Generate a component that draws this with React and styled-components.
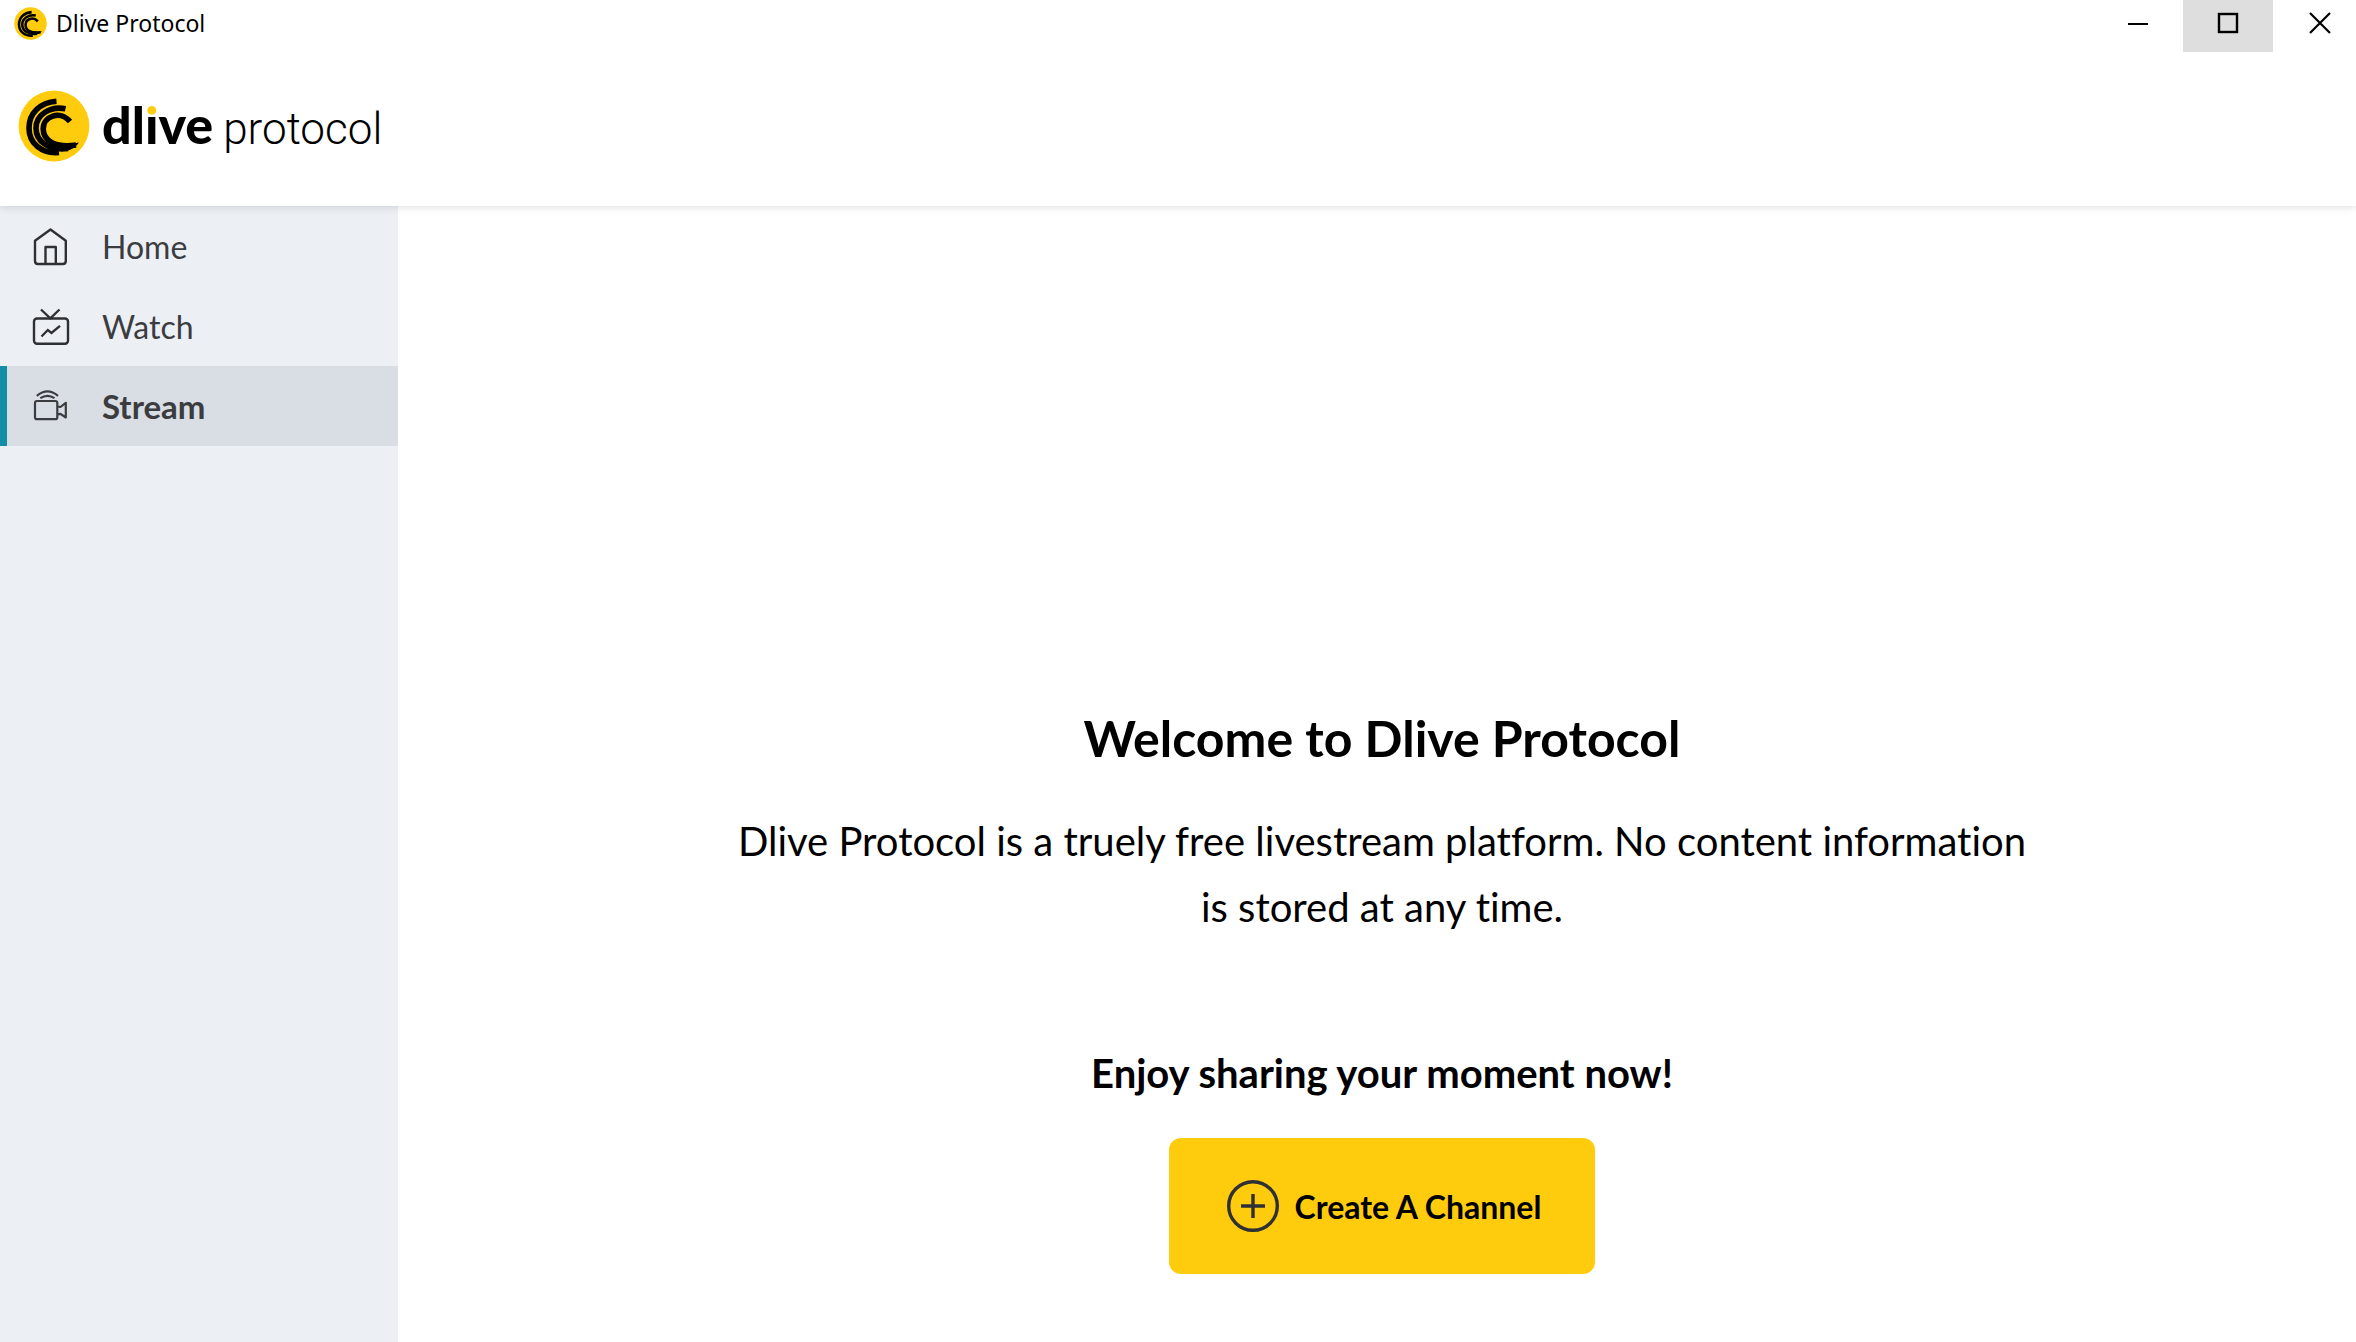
import React, {useState} from 'react';
import styled, {createGlobalStyle} from 'styled-components';

const GlobalStyle = createGlobalStyle`
    * {
        box-sizing: border-box;
    }
    body {
        margin: 0;
        background: #ffffff;
        color: #000000;
        font-family: Lato, "Open Sans", sans-serif;
        font-variant-ligatures: none;
    }
    h1, h2, p, ul {
        margin: 0;
        padding: 0;
    }
    button {
        font-family: inherit;
        border: none;
        cursor: pointer;
    }
`;

const Window = styled.div`
    min-height: 100vh;
    display: flex;
    flex-direction: column;
`;

const TitleBar = styled.div`
    height: 52px;
    display: flex;
    justify-content: space-between;
`;

const AppName = styled.div`
    display: flex;
    align-items: center;
    gap: 9px;
    padding: 0 0 6px 14px;
    font-family: "Noto Sans", sans-serif;
    font-size: 23px;
    line-height: 32px;
`;

const WindowControls = styled.div`
    display: flex;
`;

const WindowButton = styled.button`
    width: ${props => props.$last ? '83px' : '90px'};
    height: 52px;
    padding: ${props => props.$last ? '0 0 6px 10px' : '0 0 6px'};
    display: flex;
    align-items: center;
    justify-content: center;
    background: ${props => props.$active ? '#dedede' : 'transparent'};
`;

const Header = styled.header`
    height: 154px;
    padding: 38px 18px 44px;
    display: flex;
    align-items: center;
    gap: 12px;
    position: relative;
    background: #ffffff;
    box-shadow: 0 1px 8px rgba(0, 0, 0, 0.14);
    clip-path: inset(0 0 -12px 0);
`;

const Wordmark = styled.div`
    display: flex;
    align-items: baseline;
    gap: 10px;
    line-height: 56px;
`;

const Brand = styled.span`
    font-family: Lato, sans-serif;
    font-size: 52px;
    font-weight: 900;
`;

const BrandDot = styled.span`
    color: transparent;
    background: linear-gradient(#fecc0d 0 38%, #000000 38%);
    background-clip: text;
`;

const BrandSuffix = styled.span`
    font-family: Roboto, sans-serif;
    font-size: 44px;
    font-weight: 300;
`;

const Body = styled.div`
    flex: 1;
    display: flex;
`;

const Sidebar = styled.nav`
    width: 398px;
    flex-shrink: 0;
    background: #ecf0f5;
`;

const NavList = styled.ul`
    list-style: none;
`;

const NavLink = styled.a`
    height: 80px;
    padding-left: ${props => props.$active ? '23px' : '30px'};
    border-left: ${props => props.$active ? '7px solid #138ea4' : 'none'};
    display: flex;
    align-items: center;
    gap: 32px;
    background: ${props => props.$active ? '#d9dee5' : 'transparent'};
    color: #3b3c3f;
    font-size: ${props => props.$active ? '33px' : '32px'};
    font-weight: ${props => props.$active ? 700 : 400};
    text-decoration: none;
`;

const Main = styled.main`
    flex: 1;
    padding: 0 0 68px 10px;
    display: flex;
    flex-direction: column;
    align-items: center;
    justify-content: flex-end;
    text-align: center;
`;

const Title = styled.h1`
    font-size: 50px;
    line-height: 60px;
    font-weight: 700;
`;

const Description = styled.p`
    max-width: 1300px;
    margin: 40px 0 108px;
    font-size: 40px;
    line-height: 66px;
`;

const Slogan = styled.h2`
    margin-bottom: 40px;
    font-size: 40px;
    line-height: 50px;
    font-weight: 700;
`;

const CreateButton = styled.button`
    height: 136px;
    padding: 0 54px 0 58px;
    display: flex;
    align-items: center;
    gap: 16px;
    border-radius: 12px;
    background: #fecc0d;
    color: #000000;
    font-size: 32px;
    font-weight: 700;
`;

const Logo = ({size}) => (
    <svg width={size} height={size} viewBox="0 0 72 72" fill="none" aria-hidden="true">
        <circle cx="36" cy="36" r="35.4" fill="#fecc0d" />
        <g stroke="#000000" strokeWidth="5.6">
            <path d="M38.5 11.2C22 12.5 11 23 11 38C11 53 23 64 41 62.5" />
            <path d="M47.5 18.8C32 15.5 18 25 18 38C18 51 30 61 50 58.5" />
            <path d="M52 31.5C42 20 25.2 26 25.2 39C25.2 51 38 58 58 55" />
        </g>
        <path fill="#000000" d="M44 53Q52 55 61 52.6Q57 59 48 61.2Z" />
    </svg>
);

const HomeIcon = () => (
    <svg width="40" height="40" viewBox="0 0 40 40" fill="none" stroke="#2f3033" strokeWidth="2.4" strokeLinejoin="round" aria-hidden="true">
        <path d="M20.5 3.5L35.8 14.8V35Q35.8 38 32.8 38H8Q5 38 5 35V14.8Z" />
        <path d="M15.5 38V21H25.8V38" />
    </svg>
);

const WatchIcon = () => (
    <svg width="40" height="40" viewBox="0 0 40 40" fill="none" stroke="#2f3033" strokeWidth="2.4" aria-hidden="true">
        <rect x="4" y="12.5" width="34" height="25.3" rx="3" />
        <path d="M11 3.5L20.3 12.3L29.5 3.5" />
        <path d="M11.5 30.5L17.8 24L21.5 27L30 19.8" />
    </svg>
);

const StreamIcon = () => (
    <svg width="40" height="40" viewBox="0 0 40 40" fill="none" stroke="#3b3c3f" strokeWidth="2.2" strokeLinejoin="round" aria-hidden="true">
        <rect x="5" y="15" width="22.3" height="18.2" rx="2" />
        <path d="M27.3 20.5L30.5 21L35.8 16.8V31.5L30.5 27.8L27.3 28.3" />
        <path d="M6.8 9.8Q17.4 1 28 9.8" />
        <path d="M10.3 12.2Q17.4 7.5 24.5 12.2" />
    </svg>
);

const navItems = [
    {label: 'Home', Icon: HomeIcon},
    {label: 'Watch', Icon: WatchIcon},
    {label: 'Stream', Icon: StreamIcon},
];

export default function App() {
    const [current, setCurrent] = useState('Stream');

    return (
        <Window>
            <GlobalStyle />
            <TitleBar>
                <AppName>
                    <Logo size={33} />
                    Dlive Protocol
                </AppName>
                <WindowControls>
                    <WindowButton aria-label="Minimize">
                        <svg width="22" height="22" viewBox="0 0 22 22" stroke="#000000" strokeWidth="2">
                            <path d="M1 12H21" />
                        </svg>
                    </WindowButton>
                    <WindowButton aria-label="Maximize" $active>
                        <svg width="22" height="22" viewBox="0 0 22 22" fill="none" stroke="#000000" strokeWidth="2.4">
                            <rect x="2" y="2" width="18" height="18" />
                        </svg>
                    </WindowButton>
                    <WindowButton aria-label="Close" $last>
                        <svg width="22" height="22" viewBox="0 0 22 22" stroke="#000000" strokeWidth="2.2">
                            <path d="M1 1L21 21M21 1L1 21" />
                        </svg>
                    </WindowButton>
                </WindowControls>
            </TitleBar>
            <Header>
                <Logo size={72} />
                <Wordmark>
                    <Brand>dl<BrandDot>i</BrandDot>ve</Brand>
                    <BrandSuffix>protocol</BrandSuffix>
                </Wordmark>
            </Header>
            <Body>
                <Sidebar>
                    <NavList>
                        {navItems.map(({label, Icon}) => (
                            <li key={label}>
                                <NavLink href={'#' + label.toLowerCase()} $active={label === current} onClick={() => setCurrent(label)}>
                                    <Icon />
                                    {label}
                                </NavLink>
                            </li>
                        ))}
                    </NavList>
                </Sidebar>
                <Main>
                    <Title>Welcome to Dlive Protocol</Title>
                    <Description>
                        Dlive Protocol is a truely free livestream platform. No content information is stored at any time.
                    </Description>
                    <Slogan>Enjoy sharing your moment now!</Slogan>
                    <CreateButton>
                        <svg width="52" height="52" viewBox="0 0 52 52" fill="none" stroke="#2f3033" strokeWidth="3.4" aria-hidden="true">
                            <circle cx="26" cy="26" r="24.3" />
                            <path d="M26 14V38M14 26H38" />
                        </svg>
                        Create A Channel
                    </CreateButton>
                </Main>
            </Body>
        </Window>
    )
}
